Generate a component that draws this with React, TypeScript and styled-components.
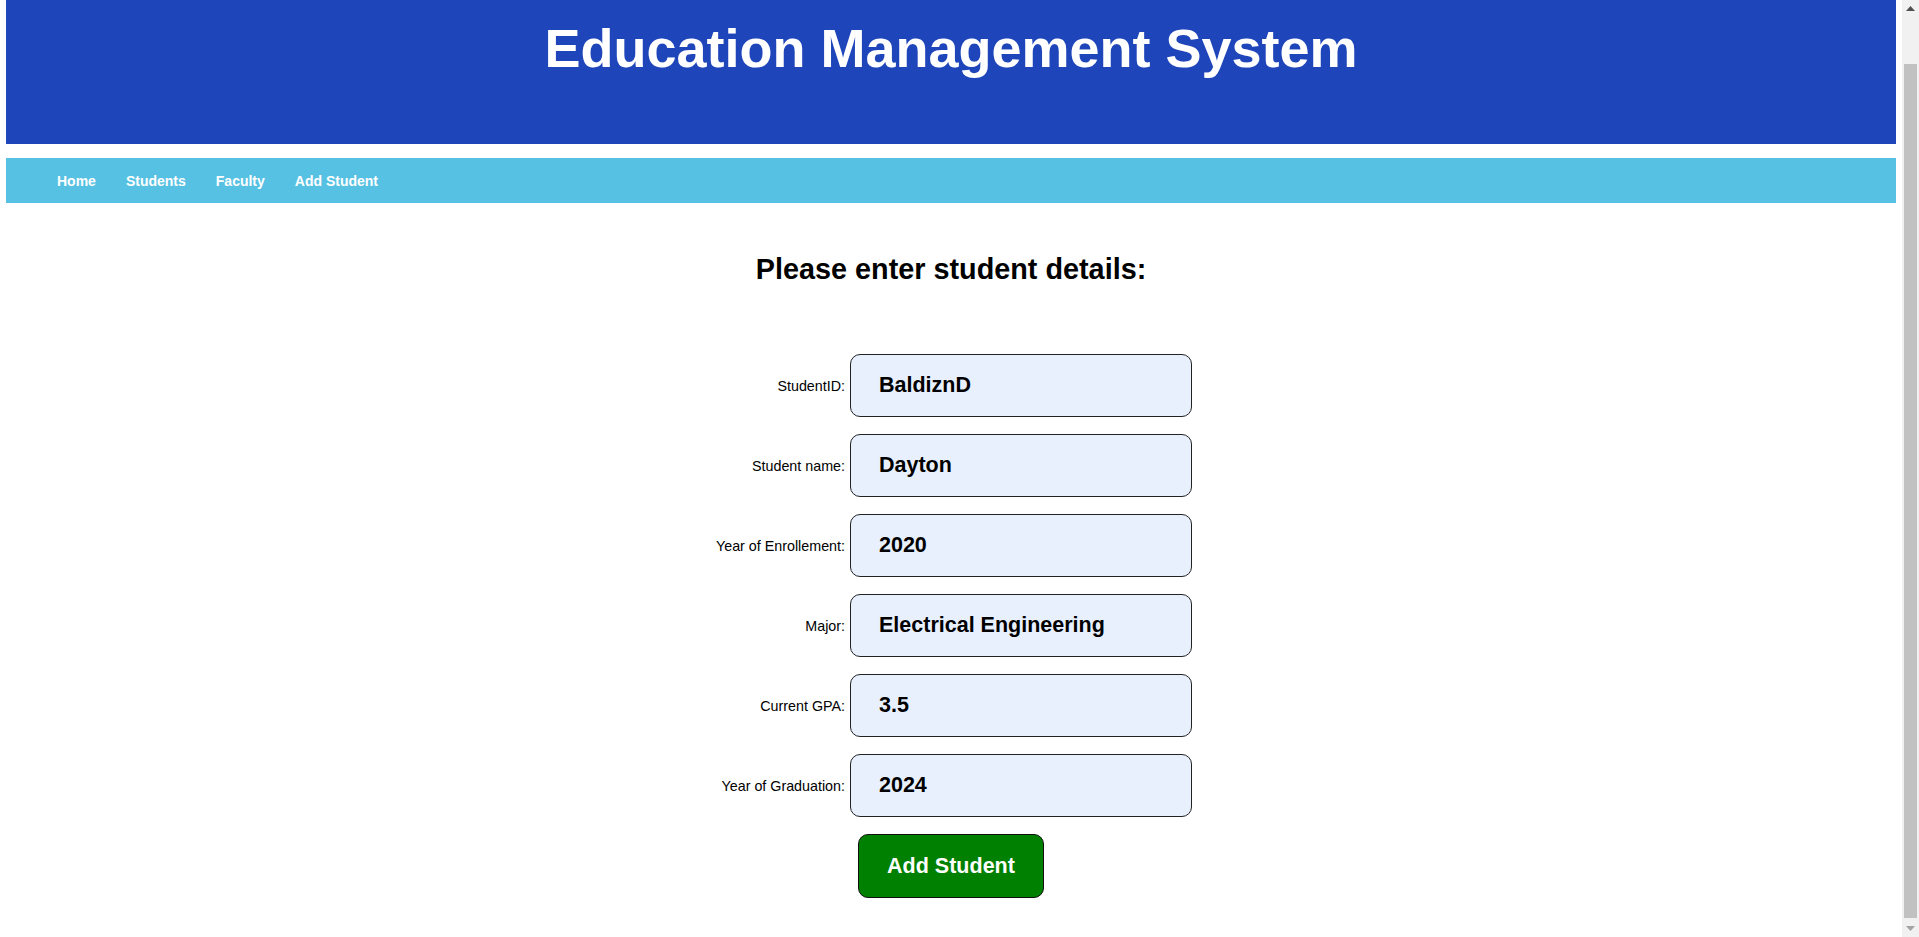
import React from 'react';
import styled, { createGlobalStyle } from 'styled-components';

const GlobalStyle = createGlobalStyle`
  html,
  body {
    margin: 0;
    padding: 0;
    height: 100%;
    overflow: hidden;
    background: #ffffff;
    font-family: 'Liberation Sans', Arial, sans-serif;
  }
`;

const Window = styled.div`
  display: flex;
  height: 100vh;
  width: 100vw;
`;

const Page = styled.div`
  flex: 1;
  padding: 0 6px;
  overflow: hidden;
`;

const Header = styled.header`
  height: 144px;
  box-sizing: border-box;
  padding-top: 17px;
  background-color: #1e45b9;
  text-align: center;
`;

const Title = styled.h1`
  margin: 0;
  color: #ffffff;
  font-size: 54px;
  font-weight: 700;
  line-height: normal;
`;

const Nav = styled.nav`
  margin-top: 14px;
  height: 45px;
  box-sizing: border-box;
  padding: 1px 0 0 51px;
  display: flex;
  align-items: center;
  gap: 30px;
  background-color: #57c1e3;
`;

const NavLink = styled.a`
  color: #ffffff;
  font-size: 14px;
  font-weight: 700;
  text-decoration: none;
  cursor: pointer;
`;

const Main = styled.main`
  display: flex;
  flex-direction: column;
  align-items: center;
  padding-top: 50px;
`;

const Heading = styled.h2`
  margin: 0;
  font-size: 28.8px;
  font-weight: 700;
  line-height: normal;
  color: #000000;
`;

const Form = styled.form`
  margin-top: 68px;
  display: flex;
  flex-direction: column;
  align-items: center;
`;

const Fields = styled.div`
  display: grid;
  grid-template-columns: max-content 342px;
  grid-auto-rows: 63px;
  column-gap: 5px;
  row-gap: 17px;
  align-items: center;
  margin-left: 6px;
`;

const Label = styled.label`
  justify-self: end;
  font-size: 14.3px;
  color: #000000;
`;

const Input = styled.input`
  box-sizing: border-box;
  width: 100%;
  height: 63px;
  padding: 0 12px 0 28px;
  border: 1px solid #222222;
  border-radius: 10px;
  background-color: #e8f0fe;
  color: #000000;
  font-family: 'Liberation Sans', Arial, sans-serif;
  font-size: 21.5px;
  font-weight: 700;
  outline: none;
`;

const SubmitButton = styled.button`
  margin-top: 17px;
  height: 64px;
  padding: 0 28px;
  border: 1px solid #111111;
  border-radius: 10px;
  background-color: #008000;
  color: #ffffff;
  font-family: 'Liberation Sans', Arial, sans-serif;
  font-size: 21.5px;
  font-weight: 700;
  cursor: pointer;
`;

// the browser's scrollbar, scrolled to the bottom
const ScrollBar = styled.div`
  width: 17px;
  display: flex;
  flex-direction: column;
  background-color: #f1f1f1;
`;

const ScrollArrow = styled.div`
  height: 17px;
  display: flex;
  align-items: center;
  justify-content: center;
`;

const ScrollTrack = styled.div`
  flex: 1;
  display: flex;
  padding: 47px 2px 2px;
`;

const ScrollThumb = styled.div`
  flex: 1;
  background-color: #c1c1c1;
`;

const Arrow: React.FC<{ down?: boolean; color: string }> = ({ down, color }) => (
  <svg width="9" height="5" viewBox="0 0 9 5">
    <path d={down ? 'M0 0 H9 L4.5 5 Z' : 'M0 5 H9 L4.5 0 Z'} fill={color} />
  </svg>
);

const fields = [
  { id: 'studentId', label: 'StudentID:', value: 'BaldiznD' },
  { id: 'name', label: 'Student name:', value: 'Dayton' },
  { id: 'enrollment', label: 'Year of Enrollement:', value: '2020' },
  { id: 'major', label: 'Major:', value: 'Electrical Engineering' },
  { id: 'gpa', label: 'Current GPA:', value: '3.5' },
  { id: 'graduation', label: 'Year of Graduation:', value: '2024' },
];

const links = ['Home', 'Students', 'Faculty', 'Add Student'];

export default function App() {
  return (
    <>
      <GlobalStyle />
      <Window>
        <Page>
          <Header>
            <Title>Education Management System</Title>
          </Header>

          <Nav>
            {links.map((link) => (
              <NavLink key={link}>{link}</NavLink>
            ))}
          </Nav>

          <Main>
            <Heading>Please enter student details:</Heading>

            <Form onSubmit={(e) => e.preventDefault()}>
              <Fields>
                {fields.map((field) => (
                  <React.Fragment key={field.id}>
                    <Label htmlFor={field.id}>{field.label}</Label>
                    <Input id={field.id} defaultValue={field.value} />
                  </React.Fragment>
                ))}
              </Fields>
              <SubmitButton type="submit">Add Student</SubmitButton>
            </Form>
          </Main>
        </Page>

        <ScrollBar>
          <ScrollArrow>
            <Arrow color="#505050" />
          </ScrollArrow>
          <ScrollTrack>
            <ScrollThumb />
          </ScrollTrack>
          <ScrollArrow>
            <Arrow down color="#a3a3a3" />
          </ScrollArrow>
        </ScrollBar>
      </Window>
    </>
  );
}
